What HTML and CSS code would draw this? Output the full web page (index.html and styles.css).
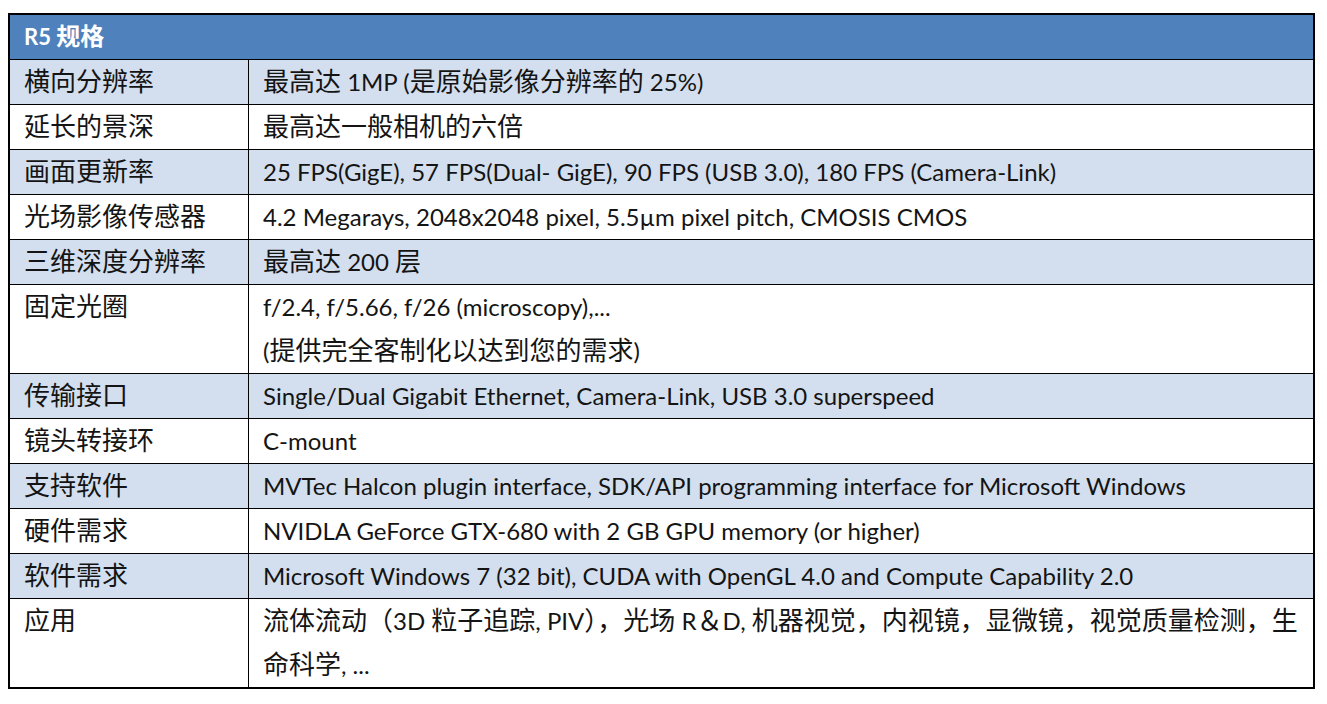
FILE: index.html
```html
<!DOCTYPE html>
<html lang="zh-CN">
<head>
<meta charset="utf-8">
<title>R5 规格</title>
<link rel="stylesheet" href="styles.css">
</head>
<body>
<table class="spec">
  <thead>
    <tr class="head"><th colspan="2">R5 <span class="zh">规格</span></th></tr>
  </thead>
  <tbody>
    <tr class="alt"><td class="k"><span class="zh">横向分辨率</span></td><td class="v"><span class="zh">最高达</span> 1MP (<span class="zh">是原始影像分辨率的</span> 25%)</td></tr>
    <tr><td class="k"><span class="zh">延长的景深</span></td><td class="v"><span class="zh">最高达一般相机的六倍</span></td></tr>
    <tr class="alt"><td class="k"><span class="zh">画面更新率</span></td><td class="v">25 FPS(GigE), 57 FPS(Dual- GigE), 90 FPS (USB 3.0), 180 FPS (Camera-Link)</td></tr>
    <tr><td class="k"><span class="zh">光场影像传感器</span></td><td class="v">4.2 Megarays, 2048x2048 pixel, 5.5µm pixel pitch, CMOSIS CMOS</td></tr>
    <tr class="alt"><td class="k"><span class="zh">三维深度分辨率</span></td><td class="v"><span class="zh">最高达</span> 200 <span class="zh">层</span></td></tr>
    <tr><td class="k"><span class="zh">固定光圈</span></td><td class="v">f/2.4, f/5.66, f/26 (microscopy),...<br>(<span class="zh">提供完全客制化以达到您的需求</span>)</td></tr>
    <tr class="alt"><td class="k"><span class="zh">传输接口</span></td><td class="v">Single/Dual Gigabit Ethernet, Camera-Link, USB 3.0 superspeed</td></tr>
    <tr><td class="k"><span class="zh">镜头转接环</span></td><td class="v">C-mount</td></tr>
    <tr class="alt"><td class="k"><span class="zh">支持软件</span></td><td class="v">MVTec Halcon plugin interface, SDK/API programming interface for Microsoft Windows</td></tr>
    <tr><td class="k"><span class="zh">硬件需求</span></td><td class="v">NVIDLA GeForce GTX-680 with 2 GB GPU memory (or higher)</td></tr>
    <tr class="alt"><td class="k"><span class="zh">软件需求</span></td><td class="v">Microsoft Windows 7 (32 bit), CUDA with OpenGL 4.0 and Compute Capability 2.0</td></tr>
    <tr><td class="k"><span class="zh">应用</span></td><td class="v"><span class="zh">流体流动（</span>3D <span class="zh">粒子追踪</span>, PIV<span class="zh">），光场</span> R<span class="zh">＆</span>D, <span class="zh">机器视觉，内视镜，显微镜，视觉质量检测，生</span><br><span class="zh">命科学</span>, ...</td></tr>
  </tbody>
</table>
</body>
</html>
```
FILE: styles.css
```css
html, body {
  margin: 0;
  padding: 0;
  background: #ffffff;
}
body {
  padding: 13px 0 0 8px;
}
.spec {
  border-collapse: collapse;
  width: 1307px;
  border: 2px solid #000;
  font-family: "Lato", "Noto Sans CJK SC", sans-serif;
  font-size: 24px;
  color: #141414;
}
.spec th, .spec td {
  border: 1px solid #000;
  padding: 0 8px 0 14px;
  height: 44px;
  line-height: 44px;
  text-align: left;
  vertical-align: top;
}
.zh {
  font-family: "Noto Sans CJK SC", sans-serif;
  font-size: 26px;
  line-height: 20px;
}
.head th {
  background: #4f81bd;
  color: #fff;
  font-weight: bold;
  font-size: 22px;
}
.head th .zh {
  font-size: 24px;
}
.alt td {
  background: #d3dfee;
}
.k {
  width: 216px;
}
```
